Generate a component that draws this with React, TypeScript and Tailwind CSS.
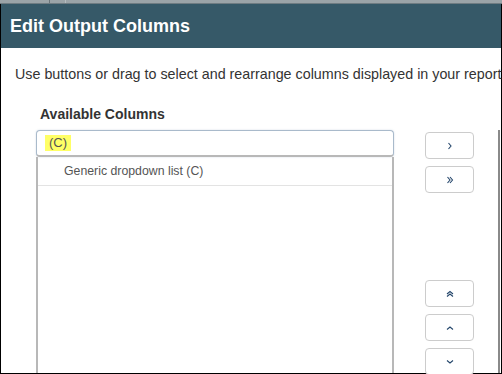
import React from "react";

const font = { fontFamily: '"Liberation Sans", Arial, sans-serif' };

function Chevron({ dir, double }: { dir: "right" | "up" | "down"; double?: boolean }) {
  const rot = dir === "right" ? 0 : dir === "up" ? -90 : 90;
  return (
    <svg width="10" height="10" viewBox="0 0 10 10" style={{ transform: `rotate(${rot}deg)` }}>
      {double ? (
        <>
          <polyline points="2.5,2 5,5 2.5,8" fill="none" stroke="#24466b" strokeWidth="1.1" />
          <polyline points="5,2 7.5,5 5,8" fill="none" stroke="#24466b" strokeWidth="1.1" />
        </>
      ) : (
        <polyline points="3.5,2 6,5 3.5,8" fill="none" stroke="#24466b" strokeWidth="1.1" />
      )}
    </svg>
  );
}

function MoveButton({ children }: { children: React.ReactNode }) {
  return (
    <button className="flex h-[27px] w-[49px] items-center justify-center rounded-[4px] border border-[#cccccc] bg-white">
      {children}
    </button>
  );
}

export default function App() {
  return (
    <div className="relative h-[374px] w-[502px] overflow-hidden bg-white" style={font}>
      {/* window strip above the dialog */}
      <div className="relative h-[4px] bg-[#9ba4a8] border-b border-[#6f7c82]">
        <div className="absolute left-[49px] top-0 h-[3px] w-px bg-[#6a7479]" />
        <div className="absolute left-[65px] top-0 h-[3px] w-px bg-[#b5bcbf]" />
      </div>

      <div className="flex h-[370px] flex-col border-x border-b border-black">
        {/* ── Header ── */}
        <div className="flex h-[44px] shrink-0 items-center bg-[#365968] pl-[9px]">
          <h1 className="text-[18px] font-bold text-white">Edit Output Columns</h1>
        </div>

        {/* ── Body ── */}
        <p className="mt-[16px] whitespace-nowrap pl-[14px] text-[14.3px] leading-[20px] text-[#333333]">
          Use buttons or drag to select and rearrange columns displayed in your report
        </p>

        <div className="mt-[20px] flex min-h-0 flex-1 pl-[35px]">
          {/* Available columns */}
          <div className="flex w-[358px] flex-col">
            <h2 className="pl-[4px] text-[14px] font-bold leading-[20px] text-[#333333]">
              Available Columns
            </h2>
            <div className="mt-[6px] flex h-[27px] items-center rounded-[4px] border border-[#a9bacb] border-b-2 border-b-[#b8b8b8] bg-white pl-[8px] shadow-[0_0_2px_rgba(120,150,180,0.35)]">
              <span className="bg-[#ffff66] px-[4px] text-[13px] leading-[16px] text-[#555555]">(C)</span>
            </div>
            <div className="flex-1 border-x-2 border-[#b8b8b8]">
              <div className="flex h-[29px] items-center border-b border-[#e3e3e3] pl-[26px] text-[12.3px] text-[#555555]">
                Generic dropdown list (C)
              </div>
            </div>
          </div>

          {/* Move buttons */}
          <div className="ml-[31px] flex flex-col pt-[28px]">
            <div className="flex flex-col gap-[7px]">
              <MoveButton>
                <Chevron dir="right" />
              </MoveButton>
              <MoveButton>
                <Chevron dir="right" double />
              </MoveButton>
            </div>
            <div className="mt-[87px] flex flex-col gap-[7px]">
              <MoveButton>
                <Chevron dir="up" double />
              </MoveButton>
              <MoveButton>
                <Chevron dir="up" />
              </MoveButton>
              <MoveButton>
                <Chevron dir="down" />
              </MoveButton>
            </div>
          </div>

          {/* Selected columns (cut off) */}
          <div className="ml-[24px] mt-[26px] flex-1 border-l-2 border-[#8a8a8a]" />
        </div>
      </div>
    </div>
  );
}
